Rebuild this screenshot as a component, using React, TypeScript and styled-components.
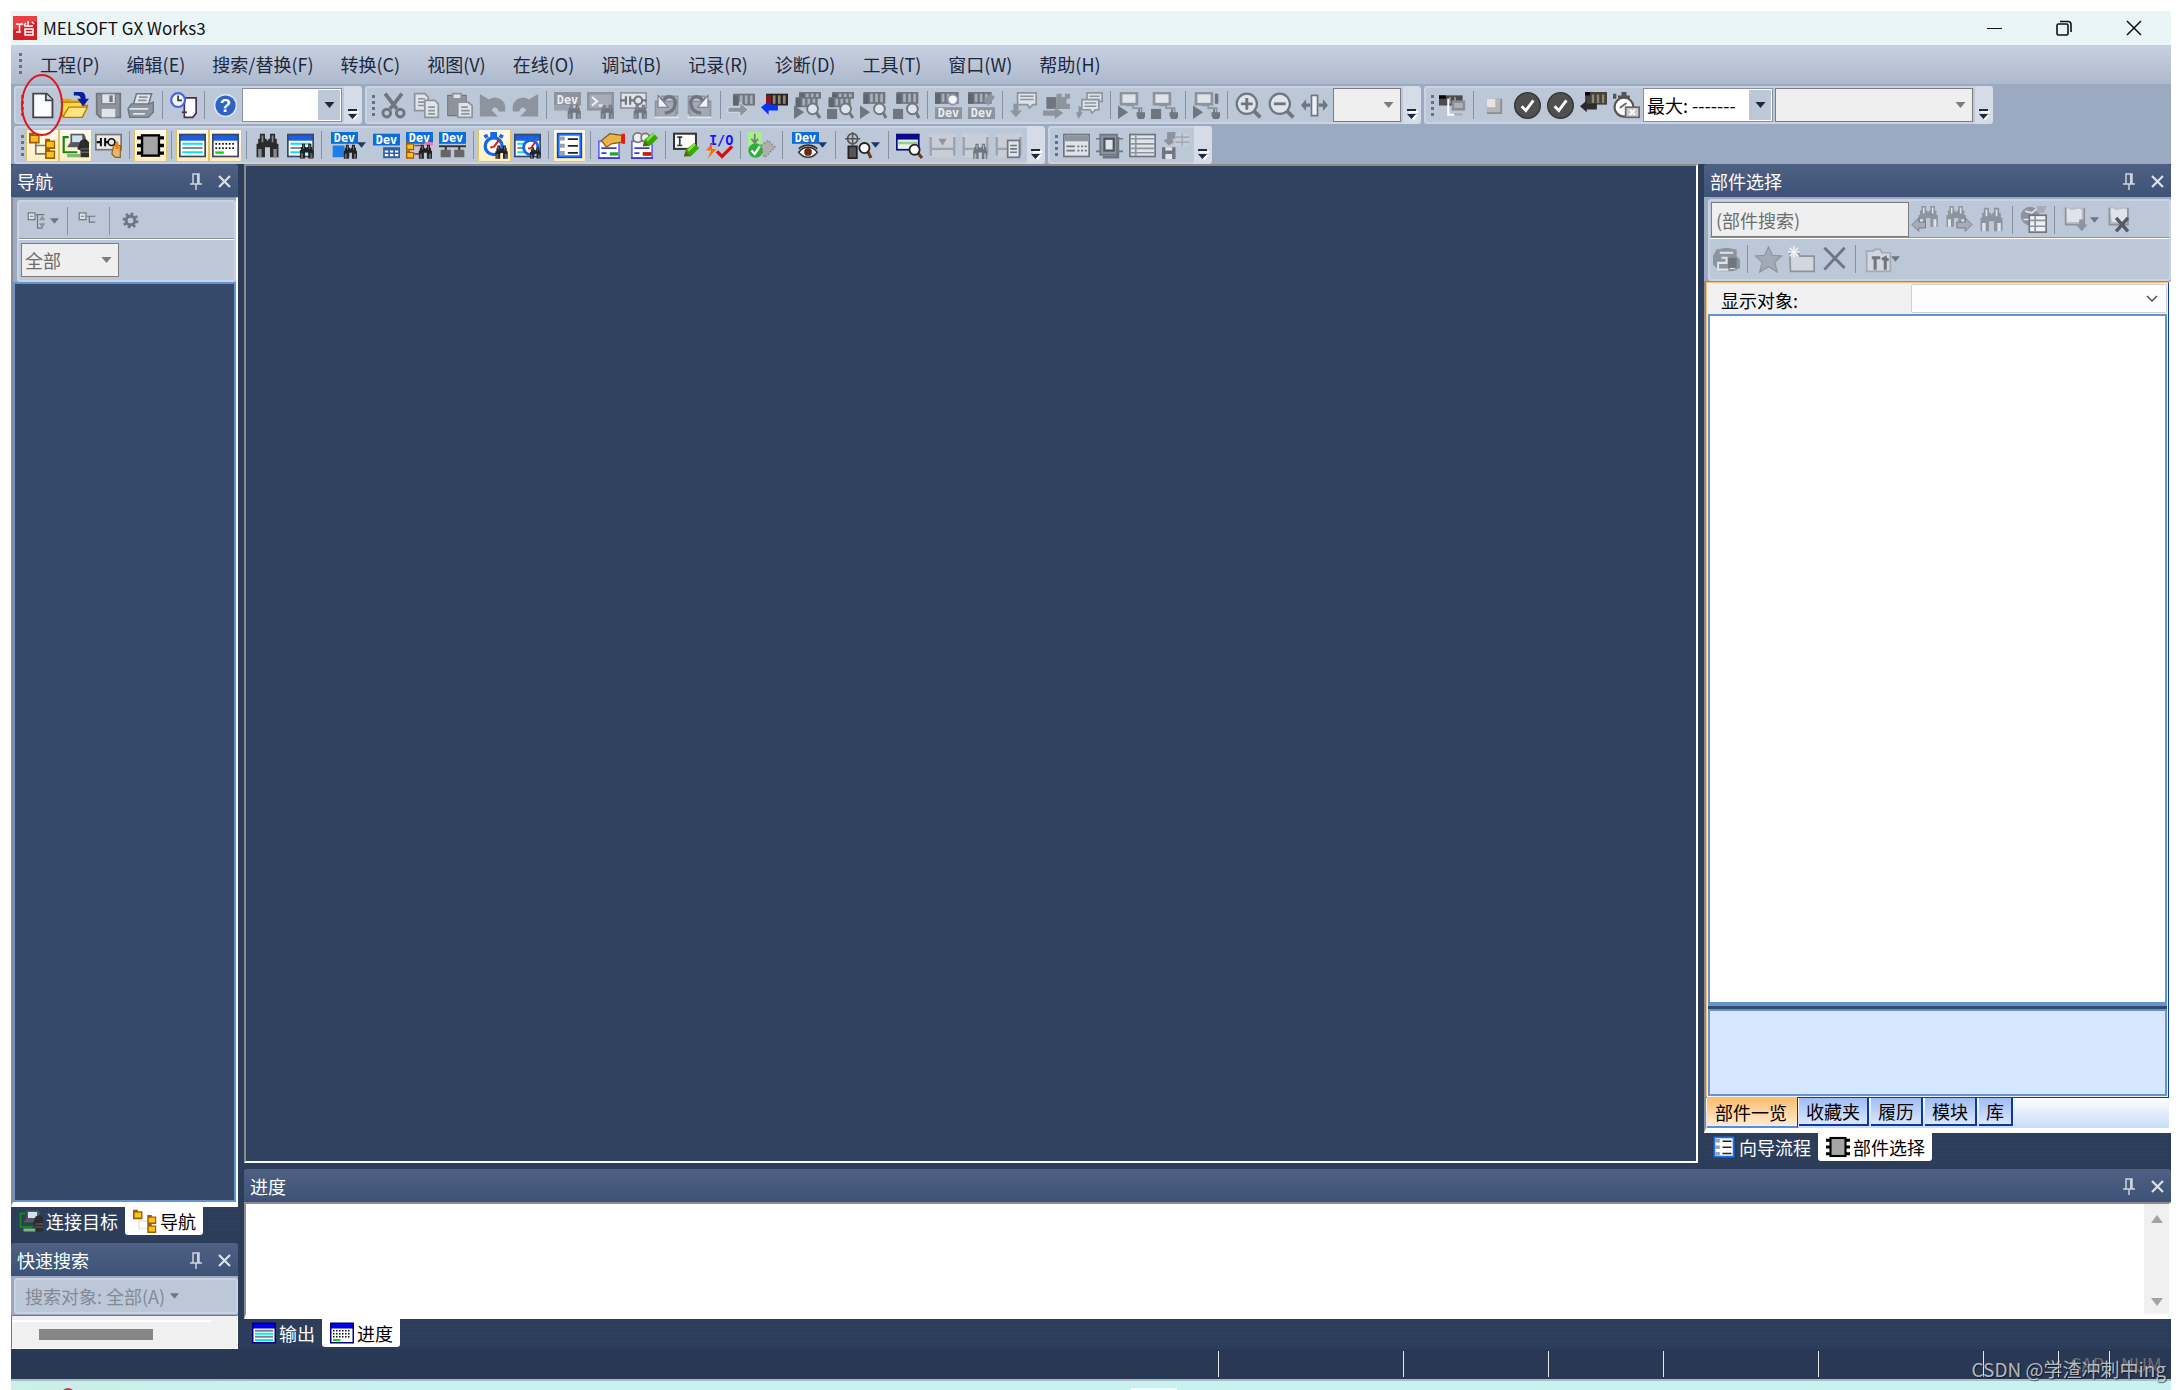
import React from "react";
import styled, { createGlobalStyle, css } from "styled-components";

const GlobalStyle = createGlobalStyle`
  *, *::before, *::after { box-sizing: border-box; }
  body {
    margin: 0;
    background: #fff;
    font-family: "Noto Sans CJK SC", "Noto Sans", sans-serif;
    font-size: 18px;
    line-height: 24px;
    color: #1b293e;
    overflow: hidden;
  }
  button, input, select { font: inherit; color: inherit; margin: 0; }
`;

/* ---------- icon parts, all drawn on a 16 unit grid ---------- */

const G1 = "#6f7680";
const G2 = "#8d949d";
const G3 = "#dfe4ea";

type Tone = { c?: boolean };

const Binoc = ({ x = 0, y = 0, s = 1, dark = "#2b2b2b", mid = "#8b8b8b" }) => (
  <g transform={`translate(${x} ${y}) scale(${s})`}>
    <path d="M3 0h3v3H3zM9 0h3v3H9zM2 3h5v4H2zM8 3h5v4H8zM1 6h5v8H1zM9 6h5v8H9zM6 4h3v4H6z" fill={dark} />
    <path d="M2 9h2v5H2zM11 9h2v5h-2zM4 1h1v4H4zM10 1h1v4h-1z" fill={mid} />
  </g>
);

const Plc = ({ x = 3, y = 1, w = 13, h = 7, c }: { x?: number; y?: number; w?: number; h?: number } & Tone) => {
  const n = Math.floor((w - 4) / 3);
  return (
    <g>
      <rect x={x} y={y} width={w} height={h} fill={c ? "#2a2622" : G1} />
      <rect x={x} y={y + 1} width={3} height={h - 1} fill={c ? "#8e1616" : "#5f666f"} />
      {Array.from({ length: n }, (_, i) => (
        <rect key={i} x={x + 4 + i * 3} y={y + 1} width={1.6} height={h - 2} fill={c ? "#8f8673" : "#a9b0b9"} />
      ))}
    </g>
  );
};

const DevTag = ({ y = 0, h = 8, c }: { y?: number; h?: number } & Tone) => (
  <g>
    <rect x={0} y={y} width={16} height={h} fill={c ? "#0a6fd8" : G2} />
    <text
      x={8}
      y={y + h - 1}
      textAnchor="middle"
      fontFamily="DejaVu Sans Mono, monospace"
      fontWeight={700}
      fontSize={7}
      fill={c ? "#fff" : "#e9edf2"}
    >
      Dev
    </text>
  </g>
);

const Mag = ({ x = 11, y = 10, r = 3.2, c }: { x?: number; y?: number; r?: number } & Tone) => (
  <g>
    <path d={`M${x + r * 0.7} ${y + r * 0.7}L15.4 15.4`} stroke={c ? "#6b3a1c" : G1} strokeWidth={1.8} />
    <circle cx={x} cy={y} r={r} fill={c ? "#fff" : G3} stroke={c ? "#222" : G1} strokeWidth={1.1} />
  </g>
);

const Play = () => <path d="M0 8l6 4-6 4z" fill={G1} />;
const Stop = () => <rect x={0} y={10} width={6} height={6} fill={G1} />;
const Folder = ({ x, y, s = 1 }: { x: number; y: number; s?: number }) => (
  <g transform={`translate(${x} ${y}) scale(${s})`}>
    <path d="M0 0h3v1h3v5H0z" fill="#9c5f00" />
    <path d="M1 1.800h4.200v3.200H1z" fill="#ffbf1f" />
  </g>
);

const Bubble = ({ x, y, w = 11, h = 7 }: { x: number; y: number; w?: number; h?: number }) => (
  <g>
    <path d={`M${x + 0.5} ${y + 0.5}h${w - 1}v${h - 1}h-2l-2 2-1-2h-${w - 6}z`} fill={G3} stroke={G2} />
    <path d={`M${x + 2} ${y + 2.5}h${w - 4}M${x + 2} ${y + 4.5}h${w - 4}`} stroke={G2} strokeWidth={0.9} />
  </g>
);

const Screen = ({ y = 1 }) => (
  <g>
    <rect x={1} y={y} width={11} height={8} fill={G2} />
    <rect x={2.6} y={y + 1.4} width={7.8} height={5} fill={G3} />
    <path d={`M5 ${y + 8}h4v1.5h5v3`} fill="none" stroke={G2} />
    <path d="M11 12h1v-2h1v2h3v3l-1 1h-3l-1-2z" fill={G1} />
  </g>
);

const Watch = ({ x = 0, y = 0, s = 1, rim = "#1767e8" }) => (
  <g transform={`translate(${x} ${y}) scale(${s})`}>
    <path d="M5 0h4v3H5zM1 2l2-1 1 2-2 1zM11 1l2 1-1 2-2-1z" fill={rim} />
    <circle cx={7} cy={8.4} r={5} fill="#fff" stroke={rim} strokeWidth={2} />
    <path d="M7 9l3-4M7 9H5" stroke="#e01919" strokeWidth={1.2} />
  </g>
);

const Pencil = ({ x = 0, y = 0 }) => (
  <g transform={`translate(${x} ${y})`}>
    <path d="M0 8l1-4 5-4 3 3-5 5z" fill="#36a800" />
    <path d="M2 4l4-4 1 1-4 4z" fill="#8be04a" />
    <path d="M0 8l1-3 2.4 2.4z" fill="#7a4d19" />
  </g>
);

const Card = () => (
  <g>
    <rect x={0.5} y={5.5} width={12} height={10} fill="#fff" stroke="#6666ee" />
    <path d="M0 15.5h13M2 9.5h9M2 12.5h3" stroke="#3c3cd0" />
    <path d="M7 12h5v2H7z" fill="#22aa22" />
  </g>
);

const ListWin = ({ lines = true }) => (
  <g>
    <rect x={0} y={1} width={16} height={14} fill="#3b4660" />
    <rect x={1} y={5} width={14} height={9} fill="#fff" />
    <rect x={1} y={2} width={14} height={3} fill="#1a5fe8" />
    {lines ? (
      <g>
        <path d="M2 7h12M2 12h12" stroke="#00e5ff" strokeWidth={1.2} />
        <path d="M2 9.5h12" stroke="#8a8a8a" strokeWidth={1.2} />
      </g>
    ) : (
      <g>
        <path d="M2 7h12M2 9.5h12" stroke="#111" strokeWidth={1} strokeDasharray="1 1" />
        <path d="M2 12.2h5" stroke="#00e000" strokeWidth={1.4} />
      </g>
    )}
  </g>
);

const FlatWin = ({ lines = true }) => (
  <g>
    <rect x={0} y={1} width={16} height={14} fill="#000078" />
    <rect x={1} y={2} width={14} height={3} fill="#0000ee" />
    <rect x={1} y={5} width={14} height={9} fill="#fff" />
    {lines ? (
      <g>
        <path d="M2 6.500h12M2 10.500h12" stroke="#808080" strokeWidth={1.2} />
        <path d="M2 8.500h12M2 12.700h12" stroke="#00eaff" strokeWidth={1.4} />
      </g>
    ) : (
      <g>
        <path d="M2 6.500h12M2 8.500h12M2 10.500h12" stroke="#111" strokeWidth={1} strokeDasharray="1 1" />
        <path d="M2 12.700h5" stroke="#00e000" strokeWidth={1.4} />
      </g>
    )}
  </g>
);

const Guide = () => (
  <g>
    <rect x={0.5} y={0.5} width={15} height={15} fill="#2f3338" />
    <rect x={1.6} y={1.6} width={12.8} height={12.8} fill="#fff" stroke="#1673ff" strokeWidth={1.2} />
    <path d="M2.2 2.6h3v2.4h-3zM2.2 7h3v2.4h-3zM2.2 11.3h3v2.4h-3z" fill="#9aa0a8" />
    <path d="M7 4.2h6M7 8.2h6M7 12.4h6" stroke="#222" strokeWidth={1} />
  </g>
);

const Chip = () => (
  <g>
    <path d="M0 3.500h16M0 8h16M0 12.500h16" stroke="#000" strokeWidth={2} />
    <rect x={3} y={2} width={10} height={12} fill="#a5a5a5" stroke="#000" strokeWidth={1.4} />
  </g>
);

const Curl = ({ flip = false }) => (
  <g transform={flip ? "translate(16 0) scale(-1 1)" : undefined}>
    <path d="M5 2.500h9.500v10H5z" fill="#c6ccd4" stroke={G2} />
    <path d="M1.500 5.500h12v9h-12z" fill="#a3aab4" stroke={G2} />
    <path d="M1 15h14" stroke="#e4e8ee" />
    <path d="M6 5c3-4 8-2 7 2.500-.5 3-2 4.500-6 5" fill="none" stroke={G1} strokeWidth={2} />
    <path d="M3 2v7h6z" fill="#eef1f5" stroke={G1} strokeWidth={0.600} />
  </g>
);

const Hand = ({ flip = false }) => (
  <path
    transform={flip ? "translate(16 0) scale(-1 1)" : undefined}
    d="M1 2v12h9l-3-3c1-3 4-3 5 0h3c1-6-5-9-9-6z"
    fill={G2}
    stroke={G2}
  />
);

const LadderDim = () => (
  <g>
    <rect x={0} y={1} width={16} height={14} fill="#c9ced6" />
    <path d="M1 3v11M15 3v11M1 10h14" stroke="#9ba3af" strokeWidth={1.4} />
  </g>
);

const Icons: Record<string, React.ReactNode> = {
  new: (
    <g>
      <path d="M2.500 1h8l3.400 3.400V15H2.500z" fill="#fbfcff" stroke="#444" strokeWidth={1.1} />
      <path d="M10 1v4h4" fill="#dde" stroke="#444" strokeWidth={1.1} />
    </g>
  ),
  open: (
    <g>
      <path d="M0 4h5l1 1h7v4H0z" fill="#f0a400" />
      <path d="M0 14V6h12v2h3l-3 7H1z" fill="#ffd84d" stroke="#b97a00" strokeWidth={0.8} />
      <path d="M1 14l3-5h11l-3 6H1z" fill="#ffe680" stroke="#b97a00" strokeWidth={0.8} />
      <path d="M7 0h4c2 0 3 1 3 4h2l-3.400 4.500L9 4h2c0-2-1-2-4-2z" fill="#0b1f9c" />
    </g>
  ),
  save: (
    <g>
      <path d="M1 1h14v14H3l-2-2z" fill={G2} stroke={G1} />
      <path d="M4 1h8v6H4z" fill={G3} stroke={G1} strokeWidth={0.6} />
      <path d="M8.500 2h2v4h-2z" fill={G1} />
      <path d="M4 10h8v5H4z" fill={G3} />
    </g>
  ),
  print: (
    <g>
      <path d="M5 1h9l-2 7H3z" fill={G3} stroke={G1} strokeWidth={0.9} />
      <path d="M6.500 3h5M6 5h5" stroke={G2} />
      <path d="M2 7h11l2-1v6l-3 3H1l-1-5z" fill={G2} stroke={G1} strokeWidth={0.8} />
      <path d="M1 10h11M3 13h7" stroke={G3} />
    </g>
  ),
  clockdoc: (
    <g>
      <path d="M8.500 3.500h7v9l-2 2.500h-5z" fill="#fff" stroke="#4a2f52" />
      <path d="M7 12h3" stroke="#4a2f52" />
      <circle cx={4.8} cy={4.8} r={4.1} fill="#f2f7ff" stroke="#4666dd" strokeWidth={1.3} />
      <path d="M4.800 2v3H7" fill="none" stroke="#333" />
    </g>
  ),
  help: (
    <g>
      <circle cx={8} cy={8} r={7} fill="#d7e4f8" />
      <circle cx={8} cy={8} r={6} fill="#2f63bf" />
      <text x={8} y={12} textAnchor="middle" fontSize={11} fontWeight={700} fill="#fff" fontFamily="Liberation Sans, sans-serif">
        ?
      </text>
    </g>
  ),
  cut: (
    <g fill="none" stroke={G1}>
      <path d="M3 1l7 9M13 1L6 10" strokeWidth={2.2} />
      <circle cx={4} cy={12.5} r={2.3} strokeWidth={1.7} />
      <circle cx={12} cy={12.5} r={2.3} strokeWidth={1.7} />
    </g>
  ),
  copy: (
    <g fill={G3} stroke={G2}>
      <path d="M1 1h6l2 2v8H1z" />
      <path d="M3 4h4M3 6h4M3 8h4" />
      <path d="M7 5h6l2 2v8H7z" />
      <path d="M9 9h4M9 11h4M9 13h4" />
    </g>
  ),
  paste: (
    <g stroke={G2}>
      <path d="M1 2h11v12H1z" fill={G2} stroke={G1} strokeWidth={0.6} />
      <path d="M4 1h5v3H4z" fill={G3} />
      <path d="M7 6h6l2.500 2v7H7z" fill={G3} />
      <path d="M9 9h4M9 11h5M9 13h5" />
    </g>
  ),
  undo: <Hand />,
  redo: <Hand flip />,
  devfind: (
    <g>
      <DevTag />
      <path d="M0 8h9v3H0z" fill={G2} opacity={0.7} />
      <Binoc x={7.5} y={7.5} s={0.6} dark={G1} mid={G2} />
    </g>
  ),
  cmdfind: (
    <g>
      <rect x={0} y={0} width={16} height={11} fill={G2} />
      <rect x={1.5} y={1.5} width={13} height={8} fill="#a5acb5" />
      <path d="M3 3l3 2.500L3 8M7 8h4" fill="none" stroke="#eef1f5" strokeWidth={1.2} />
      <Binoc x={7.5} y={7.5} s={0.6} dark={G1} mid={G2} />
    </g>
  ),
  contactfind: (
    <g>
      <rect x={0} y={0} width={16} height={10} fill={G2} />
      <rect x={1} y={1} width={14} height={8} fill={G3} />
      <path d="M0 5h3.500M3.500 2.500v5M6 2.500v5M6 5h2.500M13 5h3" stroke={G1} strokeWidth={1.3} />
      <circle cx={10.8} cy={5} r={2.3} fill="none" stroke={G1} strokeWidth={1.2} />
      <Binoc x={7.5} y={7.5} s={0.6} dark={G1} mid={G2} />
    </g>
  ),
  curlback: <Curl />,
  curlfwd: <Curl flip />,
  plcwrite: (
    <g>
      <Plc />
      <path d="M0 9h7V6l5 4.500L7 15v-3H0z" fill={G2} stroke={G3} strokeWidth={0.5} />
    </g>
  ),
  plcread: (
    <g>
      <Plc c />
      <path d="M0 9l4.500-3.500V7.500H10v3.500H4.500v2.500z" fill="#0433ff" />
    </g>
  ),
  monplay2: (
    <g><Plc x={3} y={0} w={13} h={4} /><Plc x={1} y={3} w={13} h={6} /><Play /><Mag /></g>
  ),
  monstop2: (
    <g><Plc x={3} y={0} w={13} h={4} /><Plc x={1} y={3} w={13} h={6} /><Stop /><Mag /></g>
  ),
  monplay: (
    <g><Plc x={2} y={0} w={13} h={7} /><Play /><Mag x={11.5} /></g>
  ),
  monstop: (
    <g><Plc x={2} y={0} w={13} h={7} /><Stop /><Mag x={11.5} /></g>
  ),
  devon: (
    <g><Plc x={0} y={0} w={14} h={7} /><circle cx={10.5} cy={4.5} r={3} fill="#f4f6f9" stroke={G2} /><DevTag y={9} h={7} /></g>
  ),
  devoff: (
    <g><Plc x={0} y={0} w={14} h={7} /><path d="M9 5l4-4 3 2-4 5z" fill={G2} /><DevTag y={9} h={7} /></g>
  ),
  commentdown: (
    <g><Bubble x={4} y={0} w={12} h={8} /><path d="M5 7H2v4H0l3.500 4L7 11H5V8z" fill={G2} /></g>
  ),
  blocks: (
    <g>
      <path d="M2 3h6v7H2z" fill={G1} />
      <path d="M8 1h3v2h2V1h3v3h-2v3h2v3h-8z" fill={G2} />
      <path d="M0 11h7V9l5 3.500L7 16v-2H0z" fill={G2} />
    </g>
  ),
  comments: (
    <g><Bubble x={6} y={0} w={10} h={6} /><Bubble x={3} y={4} w={11} h={7} /><path d="M3 9v3h1l-2.500 4L0 12h1.500V8z" fill={G2} /></g>
  ),
  scrplay: (<g><Screen y={0} /><Play /></g>),
  scrstop: (<g><Screen y={0} /><Stop /></g>),
  scredit: (<g><Screen y={0} /><path d="M13 1h2v6h-2z" fill={G1} /><Play /></g>),
  zoomin: (
    <g>
      <path d="M11 11l4 4" stroke={G1} strokeWidth={2.2} />
      <circle cx={7} cy={7} r={6} fill={G3} stroke={G1} strokeWidth={1.3} />
      <path d="M3.500 7h7M7 3.500v7" stroke={G1} strokeWidth={1.7} />
    </g>
  ),
  zoomout: (
    <g>
      <path d="M11 11l4 4" stroke={G1} strokeWidth={2.2} />
      <circle cx={7} cy={7} r={6} fill={G3} stroke={G1} strokeWidth={1.3} />
      <path d="M3.500 7h7" stroke={G1} strokeWidth={1.7} />
    </g>
  ),
  fit: (
    <g>
      <rect x={6.2} y={2} width={3.6} height={12} fill="#eef1f5" stroke={G1} />
      <path d="M0 7.800l3-3.500v2.500h2.500v2H3v2.500zM16 7.800l-3-3.500v2.500h-2.500v2H13v2.500z" fill={G1} />
    </g>
  ),
  plcscreen: (
    <g>
      <rect x={0} y={2} width={14} height={6} fill="#4b4b4b" />
      <path d="M0 2h4v2H0z" fill="#000" />
      <path d="M6 3h1v4H6zM9 3h1v4H9z" fill="#999" />
      <path d="M5.500 4v9.500h5" fill="none" stroke="#fff" strokeWidth={1.2} />
      <rect x={7.5} y={5} width={8} height={6} fill="#8b8f94" />
      <path d="M9 6.500h5v3H9zM9 12.500h5v1.500H9z" fill="#adb1b6" />
    </g>
  ),
  block: (
    <g>
      <rect x={3.5} y={4} width={9} height={9} fill="#8c8c8c" />
      <path d="M3.500 4h8v8h-8z" fill="#b5b5b5" />
      <path d="M3.500 4h5v5h-5z" fill="#e4e4e4" />
    </g>
  ),
  check: (
    <g>
      <circle cx={8} cy={8} r={7.6} fill="#505050" stroke="#333" strokeWidth={0.8} />
      <path d="M4.500 8.500l2.500 2.500 4.500-6" fill="none" stroke="#fff" strokeWidth={1.7} />
    </g>
  ),
  plcback: (
    <g>
      <rect x={3} y={0} width={13} height={7.5} fill="#45423e" />
      <path d="M3 0h3v2H3z" fill="#000" />
      <path d="M7 1.500h1.400v5H7zM10 1.500h1.400v5H10zM13 1.500h1.400v5H13z" fill="#8f8673" />
      <path d="M0 8.500l4-3.500v2h6v3.400H4V12z" fill="#2c2c2c" />
    </g>
  ),
  watchcard: (
    <g>
      <path d="M5 0h3v2h2v2H3V2h2zM0 1h2v3H0z" fill="#555" />
      <circle cx={6.5} cy={9} r={5.6} fill="#fff" stroke="#555" strokeWidth={1.3} />
      <path d="M4 9.500l4-3" stroke="#666" />
      <rect x={7.5} y={9} width={8} height={6} fill="#ccc" stroke="#666" />
      <path d="M10 10.500l3 3M13 10.500l-3 3" stroke="#fff" />
    </g>
  ),
  tree: (
    <g>
      <path d="M4 5v8h6M4 8h6" fill="none" stroke="#777" />
      <Folder x={0} y={0.5} s={1.05} />
      <Folder x={9.5} y={4} />
      <Folder x={9.5} y={10} />
    </g>
  ),
  treelight: (
    <g>
      <path d="M4 5v8h6M4 8h6" fill="none" stroke="#e4e4e4" />
      <Folder x={0} y={0.5} s={1.05} />
      <Folder x={9.5} y={4} />
      <Folder x={9.5} y={10} />
    </g>
  ),
  connect: (
    <g>
      <path d="M4 3H1v9h8" fill="none" stroke="#128a12" strokeWidth={1.3} />
      <path d="M3 13h8v2H3z" fill="#7fb77f" />
      <path d="M5 1h8l1 2v6H3l2-3z" fill="#555a60" />
      <path d="M6 2h6v4H6z" fill="#cfe3ef" />
      <path d="M11 5l3-1 2 2v9h-5v-4l-2-1z" fill="#2c2c2c" />
      <path d="M11 12h5M11 10h5" stroke="#666" strokeWidth={0.8} />
    </g>
  ),
  ladderhand: (
    <g>
      <rect x={0.5} y={1.5} width={15} height={9} fill="#e9e9e9" stroke="#777" />
      <path d="M1 6h2.500M3.500 3.500v5M6 3.500v5M6 6h2" stroke="#111" strokeWidth={1.2} />
      <circle cx={9.8} cy={6} r={2} fill="none" stroke="#111" />
      <path d="M11 8h4v7h-3l-2-2z" fill="#e3b778" stroke="#8d6212" strokeWidth={0.7} />
      <path d="M12 7l1-2 1 2v3h-2z" fill="#ff7a00" />
    </g>
  ),
  chip: <Chip />,
  list: <ListWin />,
  progress: <ListWin lines={false} />,
  flatlist: <FlatWin />,
  flatprogress: <FlatWin lines={false} />,
  binoc: <Binoc x={0.5} y={1} />,
  listbinoc: (<g><ListWin /><Binoc x={7} y={7} s={0.62} dark="#222" mid="#666" /></g>),
  devbinoc: (
    <g><DevTag c y={0} h={7} /><path d="M1 8h7v3h3v4H1z" fill="#1d7fe6" /><Binoc x={7} y={7.5} s={0.6} dark="#222" mid="#666" /></g>
  ),
  devtable: (
    <g>
      <DevTag c y={1} h={7} />
      <rect x={6} y={9} width={10} height={6.5} fill="#315ca8" />
      <path d="M7 11.500h8M7 13.700h8" stroke="#fff" strokeWidth={1.2} strokeDasharray="2 1" />
    </g>
  ),
  devtree: (
    <g>
      <DevTag c y={0} h={7} />
      <Folder x={0} y={6} s={0.8} /><Folder x={0} y={11} s={0.8} />
      <path d="M5 8h5M5 13h3" stroke="#a33" />
      <rect x={11} y={6} width={5} height={2} fill="#e878b8" />
      <Binoc x={7} y={7.5} s={0.6} dark="#222" mid="#666" />
    </g>
  ),
  devnet: (
    <g>
      <DevTag c y={0} h={7} />
      <path d="M0 8.500h16M4 8v3M12 8v3" stroke="#333" strokeWidth={1.2} />
      <path d="M1 10.500h6v4.500H1zM9 10.500h6v4.500H9z" fill="#666" />
    </g>
  ),
  watch: (<g><Watch x={0.5} /><Binoc x={8} y={8} s={0.56} dark="#222" mid="#666" /></g>),
  listwatch: (
    <g><ListWin /><Watch x={4} y={2} s={0.85} /><Binoc x={9} y={9} s={0.48} dark="#222" mid="#666" /></g>
  ),
  guide: <Guide />,
  cardhand: (
    <g><Card /><path d="M2 5l5-4 7 1v4l-6 1-3 2z" fill="#e8b44c" stroke="#8a5a14" strokeWidth={0.7} /><path d="M14 1h2v6h-2z" fill="#e31b1b" /></g>
  ),
  cardeye: (
    <g>
      <Card />
      <circle cx={4} cy={3.3} r={2.8} fill="#eee" stroke="#777" />
      <circle cx={8.5} cy={3.3} r={2.5} fill="#eee" stroke="#777" />
      <Pencil x={7} y={0.5} />
      <path d="M7 12h5v2H7z" fill="#dd1111" />
    </g>
  ),
  textedit: (
    <g>
      <rect x={0.6} y={1} width={13} height={9} fill="#fff" stroke="#333" strokeWidth={1.2} />
      <path d="M2.500 3h3M4 3v5M2.500 8h3" stroke="#333" />
      <Pencil x={6.5} y={6.5} />
    </g>
  ),
  io: (
    <g>
      <text x={9} y={7.5} textAnchor="middle" fontSize={8} fontWeight={700} fill="#1414ff" fontFamily="DejaVu Sans Mono, monospace">
        I/O
      </text>
      <path d="M4 6L0 11h3l-2 5 5-6H3.500z" fill="#ff6a00" />
      <path d="M6.500 11.500l3 3L15.500 8.500" fill="none" stroke="#d80f0f" strokeWidth={2} />
    </g>
  ),
  download: (
    <g>
      <path d="M0 0h8v8H0z" fill="#a8f08c" />
      <path d="M4 1v5M2 4l2 2.500L6 4" fill="none" stroke="#777" />
      <path d="M6 9l6-4 4 4-6 6z" fill="#aeb0ac" stroke="#8b8d89" strokeDasharray="1 1" />
      <circle cx={4.5} cy={11} r={4.3} fill="#2fae38" />
      <path d="M2 11l2 2 3-4.500" fill="none" stroke="#fff" strokeWidth={1.3} />
    </g>
  ),
  deveye: (
    <g>
      <DevTag c y={0} h={7} />
      <path d="M4 12c3-4 8-4 11 0-3 4-8 4-11 0z" fill="#fff" stroke="#333" strokeWidth={0.9} />
      <circle cx={9.5} cy={11.8} r={2.3} fill="#6b2d12" />
      <path d="M4 10c3-3 8-3 11 0" fill="none" stroke="#333" />
    </g>
  ),
  cross: (
    <g>
      <circle cx={4.5} cy={4} r={3} fill="none" stroke="#555" />
      <path d="M0 4h9M4.500 0v8" stroke="#555" strokeWidth={0.9} />
      <rect x={2} y={8.5} width={5} height={7} fill="#555" stroke="#222" />
      <Mag c x={11.5} y={9.5} r={3} />
    </g>
  ),
  winmag: (
    <g>
      <rect x={0} y={1} width={14} height={10} fill="#0a0a8c" />
      <rect x={1} y={4.5} width={12} height={5.5} fill="#e9efe9" />
      <path d="M1 6.500h12" stroke="#8fcf9a" strokeWidth={1.5} />
      <Mag c x={11} y={10.5} r={3} />
    </g>
  ),
  ladder1: (<g><LadderDim /><path d="M5.500 4h5L8 8z" fill={G2} /></g>),
  ladder2: (<g><LadderDim /><Binoc x={6} y={7} s={0.64} dark={G1} mid="#a9b0b9" /></g>),
  ladder3: (
    <g><LadderDim /><rect x={7.5} y={5} width={7} height={10} fill={G3} stroke={G1} /><path d="M9 8h4M9 10h4M9 12h4" stroke={G1} /></g>
  ),
  dimtable: (
    <g>
      <rect x={0.5} y={1.5} width={15} height={13} fill={G3} stroke={G1} />
      <rect x={1} y={2} width={14} height={3.5} fill={G2} />
      <path d="M2 8.500h5M2 11h5" stroke={G1} />
      <path d="M8.500 8.500h6M8.500 11h6" stroke={G1} strokeDasharray="1.200 1" />
    </g>
  ),
  dimchip: (
    <g>
      <path d="M0 4h16M0 11.500h16" stroke={G1} />
      <path d="M2.500 1.500h10v12h-10z" fill={G2} stroke={G1} />
      <path d="M13 3v12H4" fill="none" stroke={G1} strokeWidth={1.5} />
      <rect x={5} y={4} width={5.5} height={7} fill={G3} stroke="#4d545e" strokeWidth={1.3} />
    </g>
  ),
  dimlist: (
    <g>
      <rect x={0.5} y={1.5} width={15} height={13} fill={G3} stroke={G1} />
      <path d="M1 4h14M1 7h14M1 9.700h14M1 12.300h14M4 2v12" stroke={G2} />
    </g>
  ),
  dimsave: (
    <g>
      <path d="M0 9h8v7H0z" fill={G1} /><path d="M2 9h4v2H2zM2 13h4v3H2z" fill={G3} />
      <path d="M3 0h5v4H6l1 2-3 2-3-3 2-1z" fill={G2} />
      <path d="M8 1h8v7H8z" fill="#c9ced6" /><path d="M8 3h8M8 6h8M12 1v7" stroke="#a3abb6" />
    </g>
  ),
  collapse: (
    <g fill="none" stroke={G1} strokeWidth={0.7}>
      <rect x={2.5} y={3.5} width={4} height={4} fill={G3} />
      <path d="M3.500 5.500h2M7 4.500h5M8 4.500v8h3" />
      <path d="M10.800 5.500l1.200 2H9.600zM10.800 12l1.200-2H9.600z" fill={G2} stroke={G2} />
    </g>
  ),
  branch: (
    <g fill="none" stroke={G1} strokeWidth={0.7}>
      <rect x={2.5} y={3.5} width={4} height={4} fill={G3} />
      <path d="M3.500 5.500h2M7 5.500h5M8.500 5.500v3.500h3.500" />
    </g>
  ),
  gear: (
    <g fill="none" stroke={G1}>
      <circle cx={8} cy={8} r={2.6} strokeWidth={1.8} />
      <circle cx={8} cy={8} r={4} strokeWidth={1.4} strokeDasharray="1.570 1.570" />
    </g>
  ),
  bleft: (
    <g><Binoc x={3} y={0} s={0.88} dark={G2} mid={G3} /><path d="M0 11l4-4v2.500h4v3.500H4V15z" fill="#a6adb6" stroke={G1} strokeWidth={0.5} /></g>
  ),
  bright: (
    <g><Binoc x={0} y={0} s={0.88} dark={G2} mid={G3} /><path d="M16 11l-4-4v2.500H7v3.500h5V15z" fill="#a6adb6" stroke={G1} strokeWidth={0.5} /></g>
  ),
  bdim: <Binoc x={0.5} y={1} dark={G2} mid={G3} />,
  globe: (
    <g>
      <circle cx={6} cy={6} r={5.5} fill={G2} />
      <path d="M3 3l4 1 4-3M2 8h4" stroke={G3} fill="none" />
      <path d="M10 0h6l-2 4h-4z" fill="#a6adb6" />
      <rect x={5.5} y={5.5} width={10} height={10} fill="#eef1f5" stroke={G1} />
      <path d="M5.500 8.500h10M5.500 12h10M9 6v9" stroke={G2} />
    </g>
  ),
  boxadd: (
    <g><path d="M0 1h3l1 1 5-1 2 1v8H1z" fill={G3} stroke="#b9c0c9" /><path d="M1 1v10h11V1" fill="none" stroke={G2} /><path d="M9 8h3v3h2l-3.500 4L7 11h2z" fill={G2} /></g>
  ),
  boxdel: (
    <g><path d="M2 1h3l1 1 5-1 2 1v8H3z" fill={G3} stroke="#b9c0c9" /><path d="M2 1v10h11V1" fill="none" stroke={G2} /><path d="M6 7l7 8M13 7l-7 8" stroke="#555b64" strokeWidth={2} /></g>
  ),
  parts: (
    <g>
      <path d="M2 2l6-1 6 1v4l2 2v5l-4 2H4l-4-4V6z" fill={G2} />
      <path d="M4 4h8M5 7h3v3H3v4h6M10 13h3" fill="none" stroke={G3} strokeWidth={1.2} />
      <path d="M9 7h5v6H9z" fill={G1} />
    </g>
  ),
  star: <path d="M8 0.500l2.300 5 5.400.4-4 3.700 1.500 5.800L8 12.300l-5.200 3.100 1.500-5.800-4-3.700 5.400-.4z" fill="#a3aab4" stroke={G2} strokeWidth={0.7} />,
  newfolder: (
    <g>
      <path d="M1 4h5l1 2h8.500v9H1.500z" fill="#d3d8df" stroke={G2} />
      <path d="M3.500 0v7M0 3.500h7M1 1l5 5M6 1L1 6" stroke="#eef1f5" strokeWidth={0.9} />
    </g>
  ),
  del: <path d="M2 1l12 12M14 1L2 14" stroke={G1} strokeWidth={1.7} />,
  tools: (
    <g>
      <path d="M1 3h4l1-1h3l1 2h5v11H1z" fill="#d3d8df" stroke="#a3aab4" />
      <path d="M4 7h5M6 7v7M10 8l2-1v7M12 8h2" fill="none" stroke={G1} strokeWidth={1.8} />
    </g>
  ),
};

const Drawing = styled.svg`
  flex: none;
  overflow: visible;
`;

const Glyph = ({ name, size = 27 }: { name: string; size?: number }) => (
  <Drawing width={size} height={size} viewBox="0 0 16 16" aria-hidden="true">
    {Icons[name]}
  </Drawing>
);

/* ---------- shared pieces ---------- */

const Frame = styled.div`
  height: 100vh;
  padding: 11px 11px 0;
  display: flex;
  flex-direction: column;
`;

const TitleBar = styled.header`
  height: 34px;
  flex: none;
  display: flex;
  align-items: center;
  padding: 0 2px;
  background: #eaf5f7;
  color: #111;
`;

const AppTitle = styled.h1`
  margin: 0 0 0 6px;
  font-size: 17px;
  font-weight: 400;
  flex: 1;
`;

const CaptionButton = styled.button`
  width: 70px;
  height: 34px;
  padding: 0;
  border: 0;
  background: none;
  display: grid;
  place-items: center;
`;

const MenuBar = styled.nav`
  height: 39px;
  flex: none;
  display: flex;
  align-items: center;
  gap: 27px;
  padding: 0 0 2px 8px;
  background: linear-gradient(#c8d1e1, #adb9cd);
`;

const Grip = styled.span`
  width: 3px;
  height: 21px;
  flex: none;
  background: repeating-linear-gradient(#5f7294 0 3px, transparent 3px 6px);
`;

const MenuGrip = styled(Grip)`
  margin-right: -9px;
`;

const MenuItem = styled.button`
  padding: 0;
  border: 0;
  background: none;
  white-space: nowrap;
`;

const Toolbars = styled.div`
  height: 80px;
  flex: none;
  padding: 2px 0 0 3px;
  display: flex;
  flex-direction: column;
  gap: 2px;
  background: #9ba9c1;
`;

const ToolRow = styled.div`
  display: flex;
  gap: 3px;
  height: 38px;
`;

const Bar = styled.div`
  display: flex;
`;

const BarBody = styled.div`
  display: flex;
  align-items: center;
  border: 2px solid #cad3e1;
  border-right: 0;
  border-radius: 3px 0 0 3px;
  padding: 0 2px 0 5px;
  background: #bcc7d8;
  & > ${Grip} { margin-right: 2px; }
`;

const Overflow = styled.button`
  width: 18px;
  padding: 0 0 4px;
  border: 0;
  border-radius: 0 3px 3px 0;
  background: #d5dbe7;
  display: flex;
  align-items: flex-end;
  justify-content: center;
`;

const ToolButton = styled.button<{ $on?: boolean; $wide?: boolean }>`
  position: relative;
  width: ${(p) => (p.$wide ? 44 : 33)}px;
  height: 33px;
  flex: none;
  padding: 0;
  border: 1px solid transparent;
  background: none;
  display: flex;
  align-items: center;
  justify-content: center;
  ${(p) =>
    p.$on &&
    css`
      background: linear-gradient(#fffaf0, #ffeebf);
      border: 1px solid #e5c365;
    `}
`;

const DropMark = styled.span`
  display: flex;
  margin-left: -1px;
`;

const Divider = styled.span`
  width: 1px;
  height: 28px;
  margin: 0 4px;
  flex: none;
  background: #8591a2;
`;

const Ring = styled.svg`
  position: absolute;
  left: -8px;
  top: -17px;
  z-index: 2;
  pointer-events: none;
`;

const PickBox = styled.label<{ $w: number; $dim?: boolean; $ml?: number }>`
  display: grid;
  grid-template-columns: 1fr 24px;
  width: ${(p) => p.$w}px;
  height: 34px;
  flex: none;
  margin-left: ${(p) => p.$ml ?? 0}px;
  border: 1px solid ${(p) => (p.$dim ? "#7d7d7d" : "#8591a2")};
  background: ${(p) => (p.$dim ? "#efefef" : "#fff")};
  color: ${(p) => (p.$dim ? "#6d6d6d" : "#000")};
`;

const Pick = styled.select`
  grid-area: 1 / 1 / 2 / 3;
  appearance: none;
  min-width: 0;
  border: 0;
  padding: 0 24px 0 3px;
  background: none;
  color: inherit;
  opacity: 1;
`;

const PickArrow = styled.span<{ $dim?: boolean }>`
  grid-area: 1 / 2;
  pointer-events: none;
  display: grid;
  place-items: center;
  ${(p) =>
    !p.$dim &&
    css`
      background: #bcc7d8;
      border: 1px solid #fff;
    `}
`;

const Arrow = ({ color = "#1b293e", w = 11 }) => (
  <svg width={w} height={6} viewBox="0 0 10 6" aria-hidden="true">
    <path d="M0 0h10L5 6z" fill={color} />
  </svg>
);

const Combo = ({ label, value = "", w, dim, ml }: { label: string; value?: string; w: number; dim?: boolean; ml?: number }) => (
  <PickBox $w={w} $dim={dim} $ml={ml}>
    <Pick aria-label={label} disabled={dim}>
      <option>{value}</option>
    </Pick>
    <PickArrow $dim={dim}>
      <Arrow color={dim ? "#7d7d7d" : "#1b293e"} />
    </PickArrow>
  </PickBox>
);

const colored = ["devbinoc", "deveye", "cross"];

/* "|" is a divider, "*" marks a pressed button, ">" one with its own menu */
const Tools = ({ items }: { items: string }) => (
  <>
    {items.split(" ").map((t, i) => {
      if (t === "|") return <Divider key={i} />;
      const on = t.startsWith("*");
      const wide = t.startsWith(">");
      const name = t.replace(/^[*>]/, "");
      return (
        <ToolButton key={i} type="button" aria-label={name} $on={on} $wide={wide}>
          <Glyph name={name} />
          {wide && (
            <DropMark>
              <Arrow color={colored.includes(name) ? "#1b3b66" : "#70767f"} w={9} />
            </DropMark>
          )}
          {name === "new" && (
            <Ring width={46} height={64} viewBox="0 0 46 64" aria-hidden="true">
              <ellipse cx={23} cy={32} rx={20} ry={30} fill="none" stroke="#e0161f" strokeWidth={2} />
            </Ring>
          )}
        </ToolButton>
      );
    })}
  </>
);

const More = () => (
  <Overflow type="button" aria-label="more">
    <svg width={12} height={11} viewBox="0 0 12 11" aria-hidden="true">
      <path d="M3 2h9v2H3zM3 6h9l-4.500 5z" fill="#fff" />
      <path d="M1 0h9v2H1zM1 5h9l-4.500 5z" fill="#1b293e" />
    </svg>
  </Overflow>
);

const Workspace = styled.main`
  flex: 1;
  min-height: 0;
  display: grid;
  grid-template-columns: 227px minmax(0, 1fr);
  gap: 6px;
  background: #2c3d5a;
`;

const Column = styled.div`
  display: flex;
  flex-direction: column;
  min-width: 0;
  min-height: 0;
`;

const Upper = styled.div`
  flex: 1;
  min-height: 0;
  display: grid;
  grid-template-columns: minmax(0, 1fr) 467px;
  gap: 6px;
  margin-bottom: 6px;
`;

const Canvas = styled.section`
  background: #30415f;
  border: 2px solid #fff;
  border-top-color: #8c8c8c;
  border-left-color: #8c8c8c;
`;

const Head = styled.header`
  height: 33px;
  flex: none;
  display: flex;
  align-items: center;
  padding-left: 6px;
  border-radius: 3px 3px 0 0;
  background: linear-gradient(#4e6184, #3e5277);
  color: #fff;
`;

const HeadTitle = styled.h2`
  flex: 1;
  margin: 0;
  font-size: 18px;
  font-weight: 400;
`;

const HeadButton = styled.button`
  width: 28px;
  height: 33px;
  padding: 2px 0 0;
  border: 0;
  background: none;
  display: grid;
  place-items: center;
`;

const PanelHead = ({ title }: { title: string }) => (
  <Head>
    <HeadTitle>{title}</HeadTitle>
    <HeadButton type="button" aria-label="pin">
      <svg width={12} height={17} viewBox="0 0 12 17" fill="none" stroke="#ced4dd" strokeWidth={1.5} aria-hidden="true">
        <path d="M3 11V1h6v10M0 11h12M6 11v6" />
        <path d="M8 1v10" strokeWidth={2} />
      </svg>
    </HeadButton>
    <HeadButton type="button" aria-label="close">
      <svg width={13} height={13} viewBox="0 0 13 13" stroke="#dde1e8" strokeWidth={2.2} aria-hidden="true">
        <path d="M1 1l11 11M12 1L1 12" />
      </svg>
    </HeadButton>
  </Head>
);

const PanelTools = styled.div`
  flex: none;
  padding: 2px 0 0 4px;
  background: #9ba9c1;
`;

const PanelToolsBody = styled.div`
  border: 2px solid #cad3e1;
  border-radius: 3px;
  background: #bcc7d8;
`;

const Line = styled.div<{ $first?: boolean }>`
  height: 40px;
  display: flex;
  align-items: center;
  ${(p) =>
    p.$first &&
    css`
      height: 38px;
      border-bottom: 1px solid #fff;
      box-shadow: inset 0 -1px 0 #8591a2;
    `}
`;

const NavBody = styled.div`
  flex: 1;
  min-height: 0;
  display: flex;
  flex-direction: column;
  border: 2px solid #fff;
  border-top: 1px solid #8c8c8c;
  border-left-color: #8c8c8c;
  border-bottom-width: 5px;
`;

const Tree = styled.div`
  flex: 1;
  background: #354a6b;
  border: 2px solid #6593cf;
`;

const NavLine = styled(Line)`
  padding-left: 2px;
`;

const DockTabs = styled.div.attrs({ role: "tablist" })`
  height: 30px;
  flex: none;
  display: flex;
  align-items: flex-start;
  background-color: #2c3d5a;
  background-image: radial-gradient(#32456480 1px, transparent 1px);
  background-size: 4px 4px;
`;

const DockTab = styled.button<{ $on?: boolean }>`
  height: 28px;
  padding: 0 7px 0 8px;
  border: 0;
  border-radius: 0 0 3px 3px;
  background: ${(p) => (p.$on ? "#fff" : "none")};
  color: ${(p) => (p.$on ? "#000" : "#fff")};
  display: flex;
  align-items: center;
  gap: 3px;
  white-space: nowrap;
`;

const Tab = ({ icon, text, on }: { icon: string; text: string; on?: boolean }) => (
  <DockTab type="button" role="tab" aria-selected={!!on} $on={on}>
    <Glyph name={icon} size={24} />
    {text}
  </DockTab>
);

const Spacer = styled.div`
  height: 6px;
  flex: none;
`;

const QuickTools = styled.div`
  height: 39px;
  flex: none;
  padding: 2px 0 1px 3px;
  background: #9ba9c1;
`;

const QuickButton = styled.button`
  width: 100%;
  height: 36px;
  padding: 0 9px 1px;
  border: 2px solid #cad3e1;
  border-radius: 3px;
  background: #bcc7d8;
  color: #838a94;
  display: flex;
  align-items: center;
  gap: 5px;
  white-space: nowrap;
`;

const QuickBody = styled.div`
  height: 34px;
  flex: none;
  padding: 4px 26px 0 0;
  background: #f0f0f0;
  border: 1px solid #fff;
  border-top-color: #777;
  border-left-color: #777;
`;

const QuickEdge = styled.div`
  height: 2px;
  background: #fff;
`;

const QuickFill = styled.div`
  width: 114px;
  height: 11px;
  margin: 7px 0 0 27px;
  background: #868686;
`;

const SearchField = styled.input`
  width: 198px;
  height: 35px;
  flex: none;
  margin-left: 1px;
  padding: 0 4px;
  border: 1px solid #7d7d7d;
  background: #efefef;
  &::placeholder { color: #6d6d6d; opacity: 1; }
`;

const PartsBody = styled.div`
  flex: 1;
  min-height: 0;
  display: flex;
  flex-direction: column;
  border: 1px solid #8c8c8c;
  border-left-width: 2px;
  border-right: 2px solid #fff;
  border-bottom: 5px solid #fff;
`;

const PartsPage = styled.div`
  flex: 1;
  min-height: 0;
  display: flex;
  flex-direction: column;
  padding: 0 1px 1px;
  background: #f0f0f0;
  border: 1px solid #fdbf78;
  border-right-color: #0a3aa5;
  border-bottom-color: #0a3aa5;
`;

const TargetRow = styled.div`
  height: 31px;
  flex: none;
  display: grid;
  grid-template-columns: 203px minmax(0, 1fr);
  align-items: center;
  color: #000;
`;

const TargetLabel = styled.label`
  padding-left: 13px;
  padding-top: 3px;
`;

const TargetPick = styled.span`
  display: grid;
  grid-template-columns: 1fr 28px;
  height: 29px;
  background: #fdfdfd;
  border: 1px solid #d0d0d0;
  border-radius: 2px;
`;

const Chevron = styled.svg`
  grid-area: 1 / 2;
  place-self: center;
  pointer-events: none;
`;

const PartsList = styled.div`
  flex: 1;
  background: #fff;
  border: 2px solid #6593cf;
  border-bottom-width: 4px;
`;

const PartsInfo = styled.div`
  height: 87px;
  flex: none;
  background: #d6e7ff;
  border: 2px solid #6593cf;
`;

const Splitter = styled.div`
  height: 3px;
  flex: none;
  background: #354a6b;
`;

const PageTabs = styled.div.attrs({ role: "tablist" })`
  height: 30px;
  flex: none;
  display: flex;
  align-items: flex-start;
  gap: 2px;
  background: linear-gradient(#fdfeff, #c9dbfa);
`;

const PageTab = styled.button<{ $on?: boolean }>`
  height: ${(p) => (p.$on ? 31 : 28)}px;
  padding: 0 7px;
  border: 0;
  border-right: 2px solid #0a3aa5;
  border-bottom: 2px solid #0a3aa5;
  background: linear-gradient(#9fbcf5, #dbe7fc);
  color: #000;
  white-space: nowrap;
  ${(p) =>
    p.$on &&
    css`
      margin: -1px -1px 0 1px;
      padding: 0 10px 0 8px;
      border-right-width: 1px;
      border-bottom-color: #4f8df0;
      background: linear-gradient(#fdbc6c, #ffecd2);
    `}
`;

const ProgressBody = styled.div`
  height: 117px;
  flex: none;
  display: grid;
  grid-template-columns: minmax(0, 1fr) 25px;
  background: #fff;
  border: 2px solid #fff;
  border-top-color: #8c8c8c;
  border-left-color: #8c8c8c;
  border-bottom-width: 5px;
`;

const Scroller = styled.div`
  display: flex;
  flex-direction: column;
  justify-content: space-between;
  align-items: center;
  padding: 11px 0 8px;
  background: #f0f0f0;
`;

const ScrollButton = styled.button`
  padding: 0;
  border: 0;
  background: none;
  display: block;
  line-height: 0;
`;

const StatusBar = styled.footer`
  position: relative;
  height: 30px;
  flex: none;
  display: flex;
  align-items: center;
  padding: 2px 0;
  background: #293955;
  color: #6e6f73;
`;

const Cell = styled.span<{ $w?: number }>`
  height: 26px;
  line-height: 26px;
  ${(p) => (p.$w ? `width: ${p.$w}px; border-left: 1px solid #e6e6e6; padding-left: 11px;` : "flex: 1;")}
`;

const Watermark = styled.span`
  position: absolute;
  right: 5px;
  top: 8px;
  z-index: 3;
  font-size: 19px;
  color: rgba(222, 224, 228, 0.8);
  text-shadow: 1px 1px 1px rgba(0, 0, 0, 0.6);
  white-space: nowrap;
`;

const Desktop = styled.div`
  height: 11px;
  flex: none;
  border-top: 2px solid #a9bebf;
  background: linear-gradient(90deg, #cdeee9, #c9f1f2 20%);
  padding: 7px 0 0 50px;
  display: flex;
  gap: 1056px;
  overflow: hidden;
`;

const Dot = styled.span`
  width: 14px;
  height: 8px;
  border-radius: 7px 7px 0 0;
  background: #c0443a;
`;

const Patch = styled.span`
  width: 46px;
  height: 4px;
  background: #f3fbfc;
`;

const menus = [
  "工程(P)", "编辑(E)", "搜索/替换(F)", "转换(C)", "视图(V)", "在线(O)",
  "调试(B)", "记录(R)", "诊断(D)", "工具(T)", "窗口(W)", "帮助(H)",
];

export default function App() {
  return (
    <>
      <GlobalStyle />
      <Frame>
        <TitleBar>
          <svg width={24} height={24} viewBox="0 0 24 24" aria-hidden="true">
            <rect width={24} height={24} fill="#d91f26" />
            <path d="M0 0h24v5L0 14z" fill="#f05050" opacity={0.7} />
            <path d="M3 8h7M6.500 8v8M3 16h5M11 10h9M15 5v6M13 7l-2 2M19 6l2 2M12 13h8v6h-8zM12 16h8" fill="none" stroke="#fff" strokeWidth={1.5} />
          </svg>
          <AppTitle>MELSOFT GX Works3</AppTitle>
          <CaptionButton type="button" aria-label="minimize">
            <svg width={16} height={16} viewBox="0 0 16 16" stroke="#111" aria-hidden="true"><path d="M1 8.500h15" /></svg>
          </CaptionButton>
          <CaptionButton type="button" aria-label="restore">
            <svg width={16} height={16} viewBox="0 0 16 16" fill="none" stroke="#111" strokeWidth={1.6} aria-hidden="true">
              <rect x={1} y={4} width={11} height={11} rx={1.5} />
              <path d="M4 1.500h8a3 3 0 0 1 3 3V12" />
            </svg>
          </CaptionButton>
          <CaptionButton type="button" aria-label="exit">
            <svg width={16} height={16} viewBox="0 0 16 16" stroke="#111" strokeWidth={1.5} aria-hidden="true"><path d="M1 1l14 14M15 1L1 15" /></svg>
          </CaptionButton>
        </TitleBar>

        <MenuBar>
          <MenuGrip />
          {menus.map((m) => (
            <MenuItem key={m} type="button">{m}</MenuItem>
          ))}
        </MenuBar>

        <Toolbars>
          <ToolRow>
            <Bar>
              <BarBody>
                <Grip />
                <Tools items="new open save print | clockdoc | help" />
                <Combo label="help search" w={100} />
              </BarBody>
              <More />
            </Bar>
            <Bar>
              <BarBody>
                <Grip />
                <Tools items="cut copy paste undo redo | devfind cmdfind contactfind curlback curlfwd | plcwrite plcread monplay2 monstop2 monplay monstop | devon devoff | commentdown blocks comments | scrplay scrstop | scredit | zoomin zoomout fit" />
                <Combo label="zoom" w={68} dim ml={2} />
              </BarBody>
              <More />
            </Bar>
            <Bar>
              <BarBody>
                <Grip />
                <Tools items="plcscreen | block check check plcback watchcard" />
                <Combo label="scan time" value="最大: -------" w={130} />
                <Combo label="module" w={198} dim ml={2} />
              </BarBody>
              <More />
            </Bar>
          </ToolRow>
          <ToolRow>
            <Bar>
              <BarBody>
                <Grip />
                <Tools items="*tree *connect ladderhand | *chip | *list *progress | binoc listbinoc | >devbinoc devtable devtree devnet | *watch listwatch | *guide | cardhand cardeye | textedit io | download | >deveye | >cross | winmag ladder1 ladder2 ladder3" />
              </BarBody>
              <More />
            </Bar>
            <Bar>
              <BarBody>
                <Grip />
                <Tools items="dimtable dimchip dimlist dimsave" />
              </BarBody>
              <More />
            </Bar>
          </ToolRow>
        </Toolbars>

        <Workspace>
          <Column>
            <PanelHead title="导航" />
            <NavBody>
              <PanelTools>
                <PanelToolsBody>
                  <Line $first>
                    <Tools items=">collapse | branch | gear" />
                  </Line>
                  <NavLine>
                    <Combo label="filter" value="全部" w={98} dim />
                  </NavLine>
                </PanelToolsBody>
              </PanelTools>
              <Tree />
            </NavBody>
            <DockTabs>
              <Tab icon="connect" text="连接目标" />
              <Tab icon="treelight" text="导航" on />
            </DockTabs>
            <Spacer />
            <PanelHead title="快速搜索" />
            <QuickTools>
              <QuickButton type="button">
                搜索对象: 全部(A)
                <Arrow color="#70767f" w={9} />
              </QuickButton>
            </QuickTools>
            <QuickBody>
              <QuickEdge />
              <QuickFill />
            </QuickBody>
          </Column>

          <Column>
            <Upper>
              <Canvas />
              <Column>
                <PanelHead title="部件选择" />
                <PanelTools>
                  <PanelToolsBody>
                    <Line $first>
                      <SearchField type="text" aria-label="search" placeholder="(部件搜索)" />
                      <Tools items="bleft bright bdim | globe | >boxadd boxdel" />
                    </Line>
                    <Line>
                      <Tools items="parts | star newfolder del | >tools" />
                    </Line>
                  </PanelToolsBody>
                </PanelTools>
                <PartsBody>
                  <PartsPage>
                    <TargetRow>
                      <TargetLabel htmlFor="target">显示对象:</TargetLabel>
                      <TargetPick>
                        <Pick id="target"><option /></Pick>
                        <Chevron width={12} height={7} viewBox="0 0 12 7" fill="none" stroke="#444" strokeWidth={1.3}>
                          <path d="M1 1l5 5 5-5" />
                        </Chevron>
                      </TargetPick>
                    </TargetRow>
                    <PartsList />
                    <Splitter />
                    <PartsInfo />
                  </PartsPage>
                  <PageTabs>
                    <PageTab type="button" role="tab" aria-selected $on>部件一览</PageTab>
                    <PageTab type="button" role="tab">收藏夹</PageTab>
                    <PageTab type="button" role="tab">履历</PageTab>
                    <PageTab type="button" role="tab">模块</PageTab>
                    <PageTab type="button" role="tab">库</PageTab>
                  </PageTabs>
                </PartsBody>
                <DockTabs>
                  <Tab icon="guide" text="向导流程" />
                  <Tab icon="chip" text="部件选择" on />
                </DockTabs>
              </Column>
            </Upper>
            <PanelHead title="进度" />
            <ProgressBody>
              <div />
              <Scroller>
                <ScrollButton type="button" aria-label="up">
                  <svg width={12} height={8} viewBox="0 0 12 8"><path d="M0 8l6-8 6 8z" fill="#a3a3a3" /></svg>
                </ScrollButton>
                <ScrollButton type="button" aria-label="down">
                  <svg width={12} height={8} viewBox="0 0 12 8"><path d="M0 0l6 8 6-8z" fill="#a3a3a3" /></svg>
                </ScrollButton>
              </Scroller>
            </ProgressBody>
            <DockTabs>
              <Tab icon="flatlist" text="输出" />
              <Tab icon="flatprogress" text="进度" on />
            </DockTabs>
          </Column>
        </Workspace>

        <StatusBar>
          <Cell />
          <Cell $w={185} />
          <Cell $w={145} />
          <Cell $w={115} />
          <Cell $w={155} />
          <Cell $w={165} />
          <Cell $w={75} />
          <Cell $w={51}>CAP</Cell>
          <Cell $w={62}>NUM</Cell>
          <Watermark>CSDN @学渣冲刺中ing</Watermark>
        </StatusBar>
        <Desktop>
          <Dot />
          <Patch />
        </Desktop>
      </Frame>
    </>
  );
}
